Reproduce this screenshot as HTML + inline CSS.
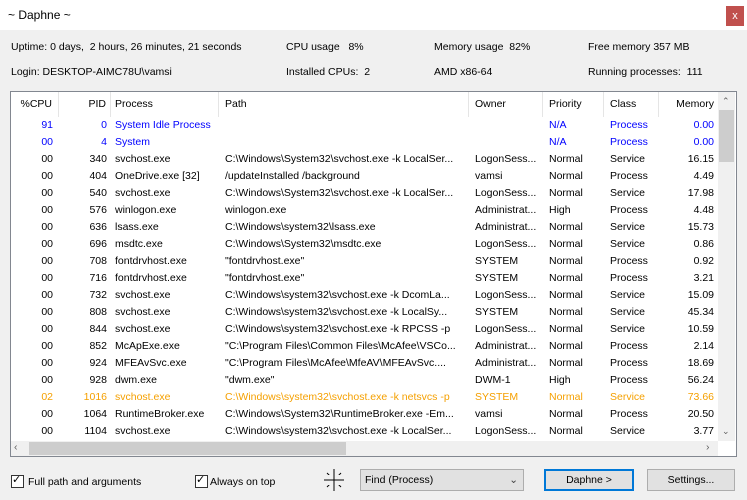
<!DOCTYPE html>
<html><head><style>
*{margin:0;padding:0;box-sizing:border-box}
body{width:747px;height:500px;background:#f0f0f0;font-family:"Liberation Sans",sans-serif;font-size:10.5px;color:#000;position:relative;overflow:hidden}
.a{position:absolute;white-space:nowrap}
#title{position:absolute;left:0;top:0;width:747px;height:30px;background:#fff}
#close{position:absolute;left:726px;top:6px;width:18px;height:20px;background:#c0504d;color:#fff;font-size:11px;text-align:center;line-height:20px}
#list{position:absolute;left:10px;top:91px;width:727px;height:366px;background:#fff;border:1px solid #828790}
.hd{position:absolute;top:0;height:25px;line-height:25px;border-right:1px solid #e5e5e5}
.row{position:absolute;left:0;width:707px;height:17px;line-height:17px}
.row span{position:absolute;white-space:nowrap;overflow:hidden}
.b{color:#0000ff}.o{color:#f5a000}
#vs{position:absolute;left:707px;top:0;width:17px;height:349px;background:#f0f0f0}
#hs{position:absolute;left:0;top:349px;width:707px;height:15px;background:#f0f0f0}
.cb{position:absolute;width:13px;height:13px;border:1px solid #333;background:#fff}
.btn{position:absolute;height:22px;background:#e1e1e1;border:1px solid #adadad;text-align:center;line-height:20px}
</style></head><body>
<div id="title"><div class="a" style="left:8px;top:8px;font-size:12px">~ Daphne ~</div><div id="close">x</div></div>
<div class="a" style="left:11px;top:41px">Uptime: 0 days,&nbsp; 2 hours, 26 minutes, 21 seconds</div>
<div class="a" style="left:286px;top:41px">CPU usage&nbsp;&nbsp; 8%</div>
<div class="a" style="left:434px;top:41px">Memory usage&nbsp; 82%</div>
<div class="a" style="left:588px;top:41px">Free memory 357 MB</div>
<div class="a" style="left:11px;top:66px">Login: DESKTOP-AIMC78U\vamsi</div>
<div class="a" style="left:286px;top:66px">Installed CPUs:&nbsp; 2</div>
<div class="a" style="left:434px;top:66px">AMD x86-64</div>
<div class="a" style="left:588px;top:66px">Running processes:&nbsp; 111</div>
<div id="list">
<div class="hd" style="left:0;width:48px;text-align:right;padding-right:6px">%CPU</div>
<div class="hd" style="left:48px;width:52px;text-align:right;padding-right:4px">PID</div>
<div class="hd" style="left:100px;width:108px;padding-left:4px">Process</div>
<div class="hd" style="left:208px;width:250px;padding-left:6px">Path</div>
<div class="hd" style="left:458px;width:74px;padding-left:6px">Owner</div>
<div class="hd" style="left:532px;width:61px;padding-left:6px">Priority</div>
<div class="hd" style="left:593px;width:55px;padding-left:6px">Class</div>
<div class="hd" style="left:648px;width:59px;text-align:right;padding-right:4px;border:none">Memory</div>
<div id="rows"></div>
<div id="vs"><div class="a" style="left:4px;top:4px;font-size:9px;color:#606060">&#8963;</div><div style="position:absolute;left:1px;top:18px;width:15px;height:52px;background:#cdcdcd"></div><div class="a" style="left:4px;top:334px;font-size:9px;color:#606060">&#8964;</div></div>
<div id="hs"><div class="a" style="left:3px;top:0;color:#606060">&#8249;</div><div style="position:absolute;left:18px;top:1px;width:317px;height:13px;background:#cdcdcd"></div><div class="a" style="left:695px;top:0;color:#606060">&#8250;</div></div>
</div>
<div class="cb" style="left:11px;top:475px"></div><div class="a" style="left:12px;top:473px;font-size:11px">&#10003;</div>
<div class="a" style="left:28px;top:476px">Full path and arguments</div>
<div class="cb" style="left:195px;top:475px"></div><div class="a" style="left:196px;top:473px;font-size:11px">&#10003;</div>
<div class="a" style="left:210px;top:476px">Always on top</div>
<svg class="a" style="left:324px;top:469px" width="20" height="22"><g stroke="#000" stroke-width="1"><line x1="10" y1="0" x2="10" y2="22"/><line x1="0" y1="11" x2="20" y2="11"/><line x1="3" y1="4" x2="17" y2="18"/><line x1="17" y1="4" x2="3" y2="18"/></g><rect x="4" y="6" width="12" height="10" fill="#f0f0f0"/><line x1="10" y1="0" x2="10" y2="22" stroke="#000"/><line x1="0" y1="11" x2="20" y2="11" stroke="#000"/></svg>
<div class="btn" style="left:360px;top:469px;width:164px;text-align:left;padding-left:4px">Find (Process)<span style="position:absolute;right:5px;color:#444">&#8964;</span></div>
<div class="btn" style="left:544px;top:469px;width:90px;border:2px solid #0078d7;line-height:18px">Daphne &gt;</div>
<div class="btn" style="left:647px;top:469px;width:88px">Settings...</div>
<script>
var d=[["b","91","0","System Idle Process","","","N/A","Process","0.00"],
["b","00","4","System","","","N/A","Process","0.00"],
["","00","340","svchost.exe","C:\\Windows\\System32\\svchost.exe -k LocalSer...","LogonSess...","Normal","Service","16.15"],
["","00","404","OneDrive.exe [32]"," /updateInstalled /background","vamsi","Normal","Process","4.49"],
["","00","540","svchost.exe","C:\\Windows\\System32\\svchost.exe -k LocalSer...","LogonSess...","Normal","Service","17.98"],
["","00","576","winlogon.exe","winlogon.exe","Administrat...","High","Process","4.48"],
["","00","636","lsass.exe","C:\\Windows\\system32\\lsass.exe","Administrat...","Normal","Service","15.73"],
["","00","696","msdtc.exe","C:\\Windows\\System32\\msdtc.exe","LogonSess...","Normal","Service","0.86"],
["","00","708","fontdrvhost.exe","\"fontdrvhost.exe\"","SYSTEM","Normal","Process","0.92"],
["","00","716","fontdrvhost.exe","\"fontdrvhost.exe\"","SYSTEM","Normal","Process","3.21"],
["","00","732","svchost.exe","C:\\Windows\\system32\\svchost.exe -k DcomLa...","LogonSess...","Normal","Service","15.09"],
["","00","808","svchost.exe","C:\\Windows\\system32\\svchost.exe -k LocalSy...","SYSTEM","Normal","Service","45.34"],
["","00","844","svchost.exe","C:\\Windows\\system32\\svchost.exe -k RPCSS -p","LogonSess...","Normal","Service","10.59"],
["","00","852","McApExe.exe","\"C:\\Program Files\\Common Files\\McAfee\\VSCo...","Administrat...","Normal","Process","2.14"],
["","00","924","MFEAvSvc.exe","\"C:\\Program Files\\McAfee\\MfeAV\\MFEAvSvc....","Administrat...","Normal","Process","18.69"],
["","00","928","dwm.exe","\"dwm.exe\"","DWM-1","High","Process","56.24"],
["o","02","1016","svchost.exe","C:\\Windows\\system32\\svchost.exe -k netsvcs -p","SYSTEM","Normal","Service","73.66"],
["","00","1064","RuntimeBroker.exe","C:\\Windows\\System32\\RuntimeBroker.exe -Em...","vamsi","Normal","Process","20.50"],
["","00","1104","svchost.exe","C:\\Windows\\system32\\svchost.exe -k LocalSer...","LogonSess...","Normal","Service","3.77"]];
var h="";d.forEach(function(r,i){h+='<div class="row '+r[0]+'" style="top:'+(25+i*17)+'px">'+
'<span style="left:0;width:42px;text-align:right">'+r[1]+'</span>'+
'<span style="left:48px;width:48px;text-align:right">'+r[2]+'</span>'+
'<span style="left:104px;width:104px">'+r[3]+'</span>'+
'<span style="left:214px;width:244px">'+r[4]+'</span>'+
'<span style="left:464px;width:68px">'+r[5]+'</span>'+
'<span style="left:538px">'+r[6]+'</span>'+
'<span style="left:599px">'+r[7]+'</span>'+
'<span style="left:648px;width:55px;text-align:right">'+r[8]+'</span></div>';});
document.getElementById("rows").innerHTML=h;
</script>
</body></html>
